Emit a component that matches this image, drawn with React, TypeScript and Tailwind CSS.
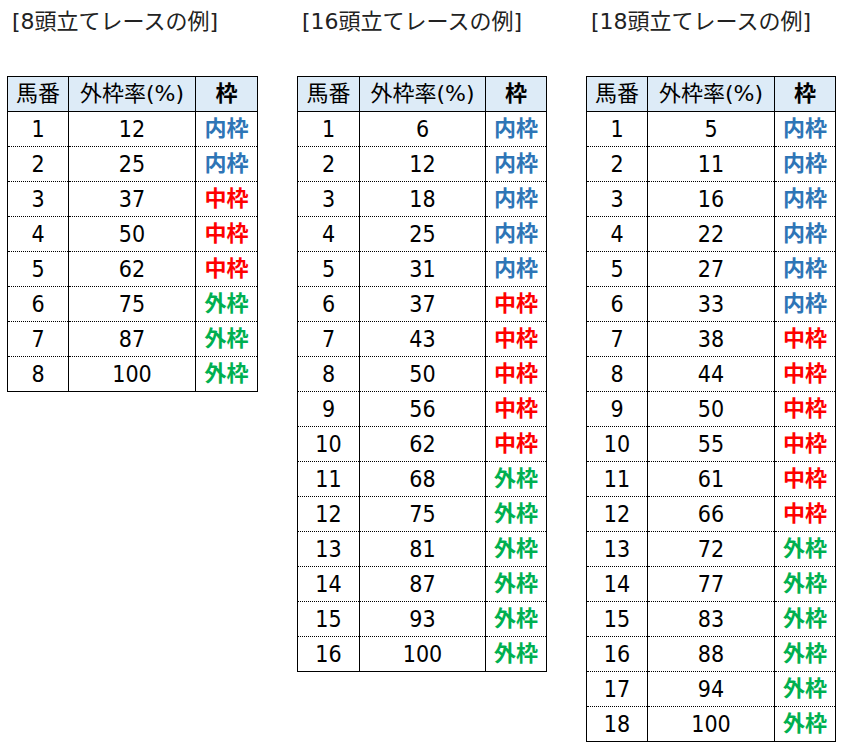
import React from 'react';

type Waku = '内枠' | '中枠' | '外枠';

interface RaceTable {
  title: string;
  rates: number[];
  inner: number; // horses 1..inner are 内枠
  middle: number; // horses inner+1..middle are 中枠
  width: string;
  cols: [string, string, string];
}

const tables: RaceTable[] = [
  { title: '[8頭立てレースの例]', rates: [12, 25, 37, 50, 62, 75, 87, 100], inner: 2, middle: 5, width: 'w-[250px]', cols: ['w-[61px]', 'w-[127px]', 'w-[62px]'] },
  { title: '[16頭立てレースの例]', rates: [6, 12, 18, 25, 31, 37, 43, 50, 56, 62, 68, 75, 81, 87, 93, 100], inner: 5, middle: 10, width: 'w-[249px]', cols: ['w-[62px]', 'w-[126px]', 'w-[61px]'] },
  { title: '[18頭立てレースの例]', rates: [5, 11, 16, 22, 27, 33, 38, 44, 50, 55, 61, 66, 72, 77, 83, 88, 94, 100], inner: 6, middle: 12, width: 'w-[249px]', cols: ['w-[61px]', 'w-[127px]', 'w-[61px]'] },
];

const wakuColor: Record<Waku, string> = {
  内枠: 'text-[#2e75b6]',
  中枠: 'text-[#ff0000]',
  外枠: 'text-[#00b050]',
};

const getWaku = (n: number, t: RaceTable): Waku => (n <= t.inner ? '内枠' : n <= t.middle ? '中枠' : '外枠');

const wide = '[font-family:"DejaVu_Sans","Noto_Sans_CJK_JP",sans-serif]';
const cell = 'border-x border-b border-black [border-bottom-style:dotted] p-0 text-center';

const WakuTable = ({ table }: { table: RaceTable }) => (
  <div className="flex flex-col">
    <div className={`h-[76px] pl-[5px] pt-[7px] text-[22px] leading-[30px] text-[#222] ${wide}`}>{table.title}</div>
    <table className={`${table.width} table-fixed border-collapse border border-black leading-none text-black`}>
      <thead>
        <tr className={`h-[35px] bg-[#ddebf7] text-[22px] ${wide}`}>
          <th className={`${table.cols[0]} border border-black p-0 font-normal`}>馬番</th>
          <th className={`${table.cols[1]} border border-black p-0 font-normal`}>外枠率(%)</th>
          <th className={`${table.cols[2]} border border-black p-0 font-bold`}>枠</th>
        </tr>
      </thead>
      <tbody>
        {table.rates.map((rate, i) => {
          const n = i + 1;
          const waku = getWaku(n, table);
          return (
            <tr key={n} className="h-[35px]">
              <td className={`${cell} text-[23px]`}>{n}</td>
              <td className={`${cell} text-[23px]`}>{rate}</td>
              <td className={`${cell} text-[22px] font-bold ${wakuColor[waku]}`}>{waku}</td>
            </tr>
          );
        })}
      </tbody>
    </table>
  </div>
);

export default function App() {
  return (
    <div
      className="flex h-[752px] w-[845px] items-start gap-[39px] bg-white pl-[7px]"
      style={{ fontFamily: '"DejaVu Sans Condensed", "DejaVu Sans", "Noto Sans CJK JP", sans-serif' }}
    >
      {tables.map((t) => (
        <WakuTable key={t.title} table={t} />
      ))}
    </div>
  );
}
